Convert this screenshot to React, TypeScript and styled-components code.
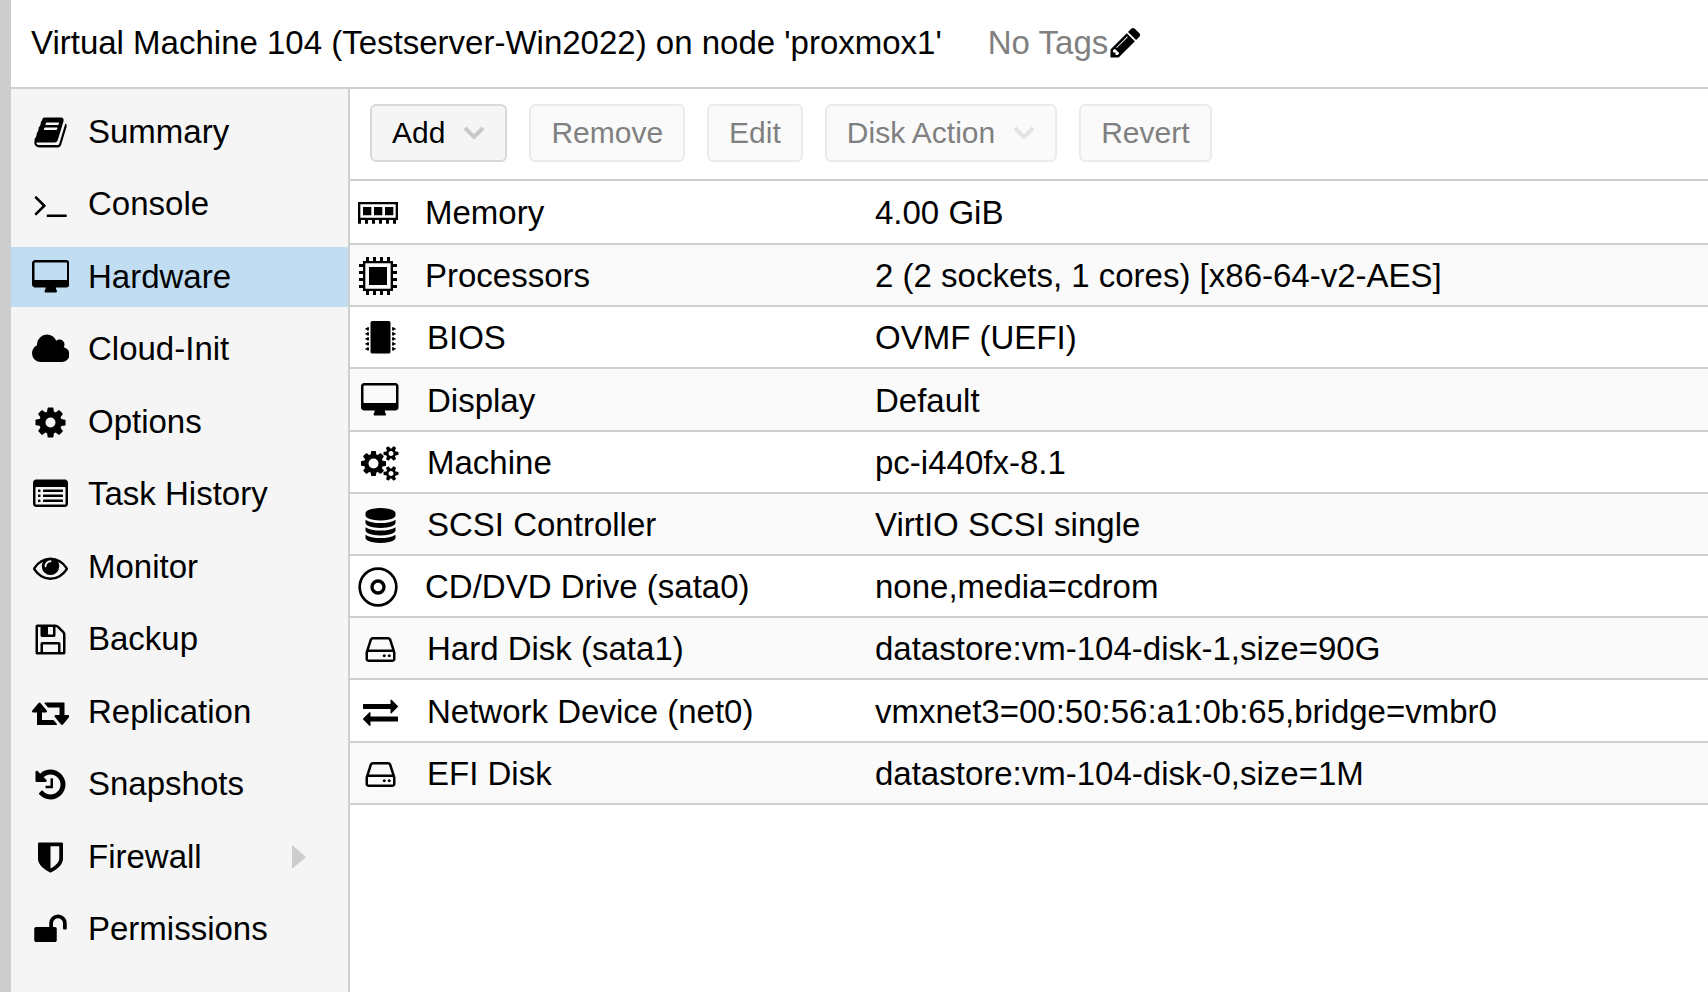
import React from "react";
import styled, { createGlobalStyle, css } from "styled-components";

const GlobalStyle = createGlobalStyle`
  *, *::before, *::after { box-sizing: border-box; }
  body {
    margin: 0;
    background: #fff;
    color: #000;
    font-family: "Liberation Sans", Arial, Helvetica, sans-serif;
    font-size: 33px;
    line-height: 40px;
  }
`;

const LINE = "#cfcfcf";

/* ---------- icons ---------- */

const Glyph = styled.svg`
  display: block;
  height: 35px;
  fill: currentColor;
`;

const DetailGlyph = styled.svg`
  display: block;
  width: 40px;
  height: 40px;
  fill: currentColor;
`;

type IconDef = { w: number; d: string };

const gearArm = (y: string) =>
  `M1920 ${y}v140q0 16-149 31-12 27-30 52 51 113 51 138 0 4-4 7-122 71-124 71-8 0-46-47t-52-68q-20 2-30 2t-30-2q-14 21-52 68t-46 47q-2 0-124-71-4-3-4-7 0-25 51-138-18-25-30-52-149-15-149-31v-140q0-16 149-31 13-29 30-52-51-113-51-138 0-4 4-7 4-2 35-20t59-34 30-16q8 0 46 46.5t52 67.5q20-2 30-2t30 2q51-71 92-112l6-2q4 0 124 70 4 3 4 7 0 25-51 138 17 23 30 52 149 15 149 31z`;

const listDot = (y: number) =>
  `M384 ${y}v64q0 13-9.5 22.5t-22.5 9.5h-64q-13 0-22.5-9.5t-9.5-22.5v-64q0-13 9.5-22.5t22.5-9.5h64q13 0 22.5 9.5t9.5 22.5z`;
const listBar = (y: number) =>
  `M1536 ${y}v64q0 13-9.5 22.5t-22.5 9.5h-960q-13 0-22.5-9.5t-9.5-22.5v-64q0-13 9.5-22.5t22.5-9.5h960q13 0 22.5 9.5t9.5 22.5z`;
const disc = (y: number) =>
  `M896 ${y}q237 0 443-43t325-127v170q0 69-103 128t-280 93.5-385 34.5-385-34.5-280-93.5-103-128v-170q119 84 325 127t443 43z`;
const chipPin = (y: number) =>
  `M304 ${y}h-96v-32h-64q-16 0-16-16v-64q0-16 16-16h64v-32h96zM1488 ${y}h96v-32h64q16 0 16-16v-64q0-16-16-16h-64v-32h-96z`;

const icons: Record<string, IconDef> = {
  book: {
    w: 1792,
    d: "M1703 478q40 57 18 129l-275 906q-19 64-76.5 107.5t-122.5 43.5h-923q-77 0-148.5-53.5t-99.5-131.5q-24-67-2-127 0-4 3-27t4-37q1-8-3-21.5t-3-19.5q2-11 8-21t16.5-23.5 16.5-23.5q23-38 45-91.5t30-91.5q3-10 .5-30t-.5-28q3-11 17-28t17-23q21-36 42-92t25-90q1-9-2.5-32t.5-28q4-13 22-30.5t22-22.5q19-26 42.5-84.5t27.5-96.5q1-8-3-25.5t-2-26.5q2-8 9-18t18-23 17-21q8-12 16.5-30.5t15-35 16-36 19.5-32 26.5-23.5 36-11.5 47.5 5.5l-1 3q38-9 51-9h761q74 0 114 56t18 130l-274 906q-36 119-71.5 153.5t-128.5 34.5h-869q-27 0-38 15-11 16-1 43 24 70 144 70h923q29 0 56-15.5t35-41.5l300-987q7-22 5-57 38 15 59 43zm-1064 2q-4 13 2 22.5t20 9.5h608q13 0 25.5-9.5t16.5-22.5l21-64q4-13-2-22.5t-20-9.5h-608q-13 0-25.5 9.5t-16.5 22.5zm-83 256q-4 13 2 22.5t20 9.5h608q13 0 25.5-9.5t16.5-22.5l21-64q4-13-2-22.5t-20-9.5h-608q-13 0-25.5 9.5t-16.5 22.5z",
  },
  terminal: {
    w: 1792,
    d: "M649 983l-466 466q-10 10-23 10t-23-10l-50-50q-10-10-10-23t10-23l393-393-393-393q-10-10-10-23t10-23l50-50q10-10 23-10t23 10l466 466q10 10 10 23t-10 23zm1079 457v64q0 14-9 23t-23 9h-960q-14 0-23-9t-9-23v-64q0-14 9-23t23-9h960q14 0 23 9t9 23z",
  },
  desktop: {
    w: 1920,
    d: "M1792 992v-832q0-13-9.5-22.5t-22.5-9.5h-1600q-13 0-22.5 9.5t-9.5 22.5v832q0 13 9.5 22.5t22.5 9.5h1600q13 0 22.5-9.5t9.5-22.5zm128-832v1088q0 66-47 113t-113 47h-544q0 37 16 77.5t32 71 16 43.5q0 26-19 45t-45 19h-512q-26 0-45-19t-19-45q0-14 16-44t32-70 16-78h-544q-66 0-113-47t-47-113v-1088q0-66 47-113t113-47h1600q66 0 113 47t47 113z",
  },
  cloud: {
    w: 1920,
    d: "M1920 1152q0 159-112.5 271.5t-271.5 112.5h-1088q-185 0-316.5-131.5t-131.5-316.5q0-132 71-241.5t187-163.5q-2-28-2-43 0-212 150-362t362-150q158 0 286.5 88t187.5 230q70-62 166-62 106 0 181 75t75 181q0 75-41 138 129 30 213 134.5t84 239.5z",
  },
  cog: {
    w: 1792,
    d: "M1152 896q0-106-75-181t-181-75-181 75-75 181 75 181 181 75 181-75 75-181zm512-109v222q0 12-8 23t-20 13l-185 28q-19 54-39 91 35 50 107 138 10 12 10 25t-9 23q-27 37-99 108t-94 71q-12 0-26-9l-138-108q-44 23-91 38-16 136-29 186-7 28-36 28h-222q-14 0-24.5-8.5t-11.5-21.5l-28-184q-49-16-90-37l-141 107q-10 9-25 9-14 0-25-11-126-114-165-168-7-10-7-23 0-12 8-23 15-21 51-66.5t54-70.5q-27-50-41-99l-183-27q-13-2-21-12.5t-8-23.5v-222q0-12 8-23t19-13l186-28q14-46 39-92-40-57-107-138-10-12-10-24 0-10 9-23 26-36 98.5-107.5t94.5-71.5q13 0 26 10l138 107q44-23 91-38 16-136 29-186 7-28 36-28h222q14 0 24.5 8.5t11.5 21.5l28 184q49 16 90 37l142-107q9-9 24-9 13 0 25 10 129 119 165 170 7 8 7 22 0 12-8 23-15 21-51 66.5t-54 70.5q26 50 41 98l183 28q13 2 21 12.5t8 23.5z",
  },
  list: {
    w: 1792,
    d:
      [1184, 928, 672].map((y) => listDot(y) + listBar(y)).join("") +
      "M1664 1376v-832q0-13-9.5-22.5t-22.5-9.5h-1472q-13 0-22.5 9.5t-9.5 22.5v832q0 13 9.5 22.5t22.5 9.5h1472q13 0 22.5-9.5t9.5-22.5zm128-1088v1088q0 66-47 113t-113 47h-1472q-66 0-113-47t-47-113v-1088q0-66 47-113t113-47h1472q66 0 113 47t47 113z",
  },
  eye: {
    w: 1792,
    d: "M1664 960q-152-236-381-353 61 104 61 225 0 185-131.5 316.5t-316.5 131.5-316.5-131.5-131.5-316.5q0-121 61-225-229 117-381 353 133 205 333.5 326.5t434.5 121.5 434.5-121.5 333.5-326.5zm-720-384q0-20-14-34t-34-14q-125 0-214.5 89.5t-89.5 214.5q0 20 14 34t34 14 34-14 14-34q0-86 61-147t147-61q20 0 34-14t14-34zm848 384q0 34-20 69-140 230-376.5 368.5t-499.5 138.5-499.5-139-376.5-368q-20-35-20-69t20-69q140-229 376.5-368t499.5-139 499.5 139 376.5 368q20 35 20 69z",
  },
  floppy: {
    w: 1792,
    d: "M512 1536h768v-384h-768v384zm896 0h128v-896q0-14-10-38.5t-20-34.5l-281-281q-10-10-34-20t-39-10v416q0 40-28 68t-68 28h-576q-40 0-68-28t-28-68v-416h-128v1280h128v-416q0-40 28-68t68-28h832q40 0 68 28t28 68v416zm-384-928v-320q0-13-9.5-22.5t-22.5-9.5h-192q-13 0-22.5 9.5t-9.5 22.5v320q0 13 9.5 22.5t22.5 9.5h192q13 0 22.5-9.5t9.5-22.5zm640 32v928q0 40-28 68t-68 28h-1344q-40 0-68-28t-28-68v-1344q0-40 28-68t68-28h928q40 0 88 20t76 48l280 280q28 28 48 76t20 88z",
  },
  retweet: {
    w: 1920,
    d: "M1280 1504q0 13-9.5 22.5t-22.5 9.5h-960q-8 0-13.5-2t-9-7-5.5-8-3-11.5-1-11.5v-600h-192q-26 0-45-19t-19-45q0-24 15-41l320-384q19-22 49-22t49 22l320 384q15 17 15 41 0 26-19 45t-45 19h-192v384h576q16 0 25 11l160 192q7 10 7 21zm640-416q0 24-15 41l-320 384q-20 23-49 23t-49-23l-320-384q-15-17-15-41 0-26 19-45t45-19h192v-384h-576q-16 0-25-12l-160-192q-7-9-7-20 0-13 9.5-22.5t22.5-9.5h960q8 0 13.5 2t9 7 5.5 8 3 11.5 1 11.5v600h192q26 0 45 19t19 45z",
  },
  history: {
    w: 1792,
    d: "M1664 896q0 156-61 298t-164 245-245 164-298 61q-172 0-327-72.5t-264-204.5q-7-10-6.5-22.5t8.5-20.5l137-138q10-9 25-9 16 2 23 12 73 95 179 147t225 52q104 0 198.5-40.5t163.5-109.5 109.5-163.5 40.5-198.5-40.5-198.5-109.5-163.5-163.5-109.5-198.5-40.5q-98 0-188 35.5t-160 101.5l137 138q31 30 14 69-17 40-59 40h-448q-26 0-45-19t-19-45v-448q0-42 40-59 39-17 69 14l130 129q107-101 244.5-156.5t284.5-55.5q156 0 298 61t245 164 164 245 61 298zm-640-288v448q0 14-9 23t-23 9h-320q-14 0-23-9t-9-23v-64q0-14 9-23t23-9h224v-352q0-14 9-23t23-9h64q14 0 23 9t9 23z",
  },
  shield: {
    w: 1792,
    d: "M1344 960v-640h-448v1137q119-63 213-137 235-184 235-360zm192-768v768q0 86-33.5 170.5t-83 150-118 127.5-126.5 103-121 77.5-89.5 49.5-42.5 20q-12 6-26 6t-26-6q-16-7-42.5-20t-89.5-49.5-121-77.5-126.5-103-118-127.5-83-150-33.5-170.5v-768q0-26 19-45t45-19h1152q26 0 45 19t19 45z",
  },
  unlock: {
    w: 1792,
    d: "M1728 576v256q0 26-19 45t-45 19h-64q-26 0-45-19t-19-45v-256q0-106-75-181t-181-75-181 75-75 181v192h96q40 0 68 28t28 68v576q0 40-28 68t-68 28h-960q-40 0-68-28t-28-68v-576q0-40 28-68t68-28h672v-192q0-185 131.5-316.5t316.5-131.5 316.5 131.5 131.5 316.5z",
  },
  pencil: {
    w: 1792,
    d: "M491 1536l91-91-235-235-91 91v107h128v128h107zm523-928q0-22-22-22-10 0-17 7l-542 542q-7 7-7 17 0 22 22 22 10 0 17-7l542-542q7-7 7-17zm-54-192l416 416-832 832h-416v-416zm683 96q0 53-37 90l-166 166-416-416 166-165q36-38 90-38 53 0 91 38l235 234q37 39 37 91z",
  },
  chip: {
    w: 1792,
    d:
      [480, 736, 992, 1248, 1504].map(chipPin).join("") +
      "M1408 96v1472q0 40-28 68t-68 28h-832q-40 0-68-28t-28-68v-1472q0-40 28-68t68-28h832q40 0 68 28t28 68z",
  },
  cogs: {
    w: 1920,
    d:
      "M896 896q0-106-75-181t-181-75-181 75-75 181 75 181 181 75 181-75 75-181zm768 512q0-52-38-90t-90-38-90 38-38 90q0 53 37.5 90.5t90.5 37.5 90.5-37.5 37.5-90.5zm0-1024q0-52-38-90t-90-38-90 38-38 90q0 53 37.5 90.5t90.5 37.5 90.5-37.5 37.5-90.5zm-384 421v185q0 10-7 19.5t-16 10.5l-155 24q-11 35-32 76 34 48 90 115 7 11 7 20 0 12-7 19-23 30-82.5 89.5t-78.5 59.5q-11 0-21-7l-115-90q-37 19-77 31-11 108-23 155-7 24-30 24h-186q-11 0-20-7.5t-10-17.5l-23-153q-34-10-75-31l-118 89q-7 7-20 7-11 0-21-8-144-133-144-160 0-9 7-19 10-14 41-53t47-61q-23-44-35-82l-152-24q-10-1-17-9.5t-7-19.5v-185q0-10 7-19.5t16-10.5l155-24q11-35 32-76-34-48-90-115-7-11-7-20 0-12 7-20 22-30 82-89t79-59q11 0 21 7l115 90q34-18 77-32 11-108 23-154 7-24 30-24h186q11 0 20 7.5t10 17.5l23 153q34 10 75 31l118-89q8-7 20-7 11 0 21 8 144 133 144 160 0 8-7 19-12 16-42 54t-45 60q23 48 34 82l152 23q10 2 17 10.5t7 19.5z" +
      gearArm("1338") +
      gearArm("314"),
  },
  database: {
    w: 1792,
    d:
      [768, 1152, 1536].map(disc).join("") +
      "M896 0q208 0 385 34.5t280 93.5 103 128v128q0 69-103 128t-280 93.5-385 34.5-385-34.5-280-93.5-103-128v-128q0-69 103-128t280-93.5 385-34.5z",
  },
  hdd: {
    w: 1792,
    d: "M1168 1216q0 33-23.5 56.5t-56.5 23.5-56.5-23.5-23.5-56.5 23.5-56.5 56.5-23.5 56.5 23.5 23.5 56.5zm256 0q0 33-23.5 56.5t-56.5 23.5-56.5-23.5-23.5-56.5 23.5-56.5 56.5-23.5 56.5 23.5 23.5 56.5zm112 160v-320q0-13-9.5-22.5t-22.5-9.5h-1216q-13 0-22.5 9.5t-9.5 22.5v320q0 13 9.5 22.5t22.5 9.5h1216q13 0 22.5-9.5t9.5-22.5zm-1230-480h1180l-157-482q-4-13-16-21.5t-26-8.5h-782q-14 0-26 8.5t-16 21.5zm1358 160v320q0 66-47 113t-113 47h-1216q-66 0-113-47t-47-113v-320q0-25 16-75l197-606q17-53 63-86t101-33h782q55 0 101 33t63 86l197 606q16 50 16 75z",
  },
  exchange: {
    w: 1792,
    d: "M1792 1184v192q0 13-9.5 22.5t-22.5 9.5h-1376v192q0 13-9.5 22.5t-22.5 9.5q-12 0-24-10l-319-320q-9-9-9-22 0-14 9-23l320-320q9-9 23-9 13 0 22.5 9.5t9.5 22.5v192h1376q13 0 22.5 9.5t9.5 22.5zm0-544q0 14-9 23l-320 320q-9 9-23 9-13 0-22.5-9.5t-9.5-22.5v-192h-1376q-13 0-22.5-9.5t-9.5-22.5v-192q0-13 9.5-22.5t22.5-9.5h1376v-192q0-14 9-23t23-9q12 0 24 10l319 319q9 9 9 23z",
  },
};

const Icon = ({ name }: { name: string }) => (
  <Glyph viewBox={`0 0 ${icons[name].w} 1792`} fillRule="nonzero" aria-hidden="true">
    <path d={icons[name].d} />
  </Glyph>
);

const MemoryIcon = () => (
  <DetailGlyph viewBox="0 0 120 120" aria-hidden="true">
    <path
      fillRule="evenodd"
      d="M0 27h120v54h-6v11h-9v-11h-12v11h-9v-11h-12v11h-9v-11h-12v11h-9v-11h-12v11h-9v-11h-12v11h-12v-11h-6zM7 34v40h106v-40z"
    />
    <path d="M15 42h25v25h-25zM48 42h25v25h-25zM81 42h25v25h-25z" />
  </DetailGlyph>
);

const ProcessorIcon = () => (
  <DetailGlyph viewBox="0 0 120 120" aria-hidden="true">
    <path fillRule="evenodd" d="M15 15h90v90h-90zM22 22v76h76v-76z" />
    <path d="M33 33h54v54h-54z" />
    {[24, 45, 66, 87].map((p) => (
      <path
        key={p}
        d={`M${p} 3h9v13h-9zM${p} 104h9v13h-9zM3 ${p}h13v9h-13zM104 ${p}h13v9h-13z`}
      />
    ))}
  </DetailGlyph>
);

const DiscIcon = () => (
  <DetailGlyph viewBox="0 0 120 120" aria-hidden="true">
    <circle cx="60" cy="60" r="55" fill="none" stroke="currentColor" strokeWidth="8" />
    <circle cx="60" cy="60" r="18" fill="none" stroke="currentColor" strokeWidth="10" />
  </DetailGlyph>
);

/* ---------- layout ---------- */

const Page = styled.div`
  display: flex;
  flex-direction: column;
  min-height: 100vh;
  border-left: 11px solid #cdcdce;
`;

const Header = styled.header`
  display: flex;
  align-items: center;
  height: 89px;
  padding: 0 20px 2px;
  border-bottom: 2px solid ${LINE};
`;

const Title = styled.h1`
  margin: 0;
  font-size: 33px;
  font-weight: 400;
  white-space: nowrap;
`;

const Tags = styled.div`
  display: flex;
  align-items: center;
  margin-left: 46px;
  color: #808080;
  white-space: nowrap;
`;

const TagEdit = styled.button`
  padding: 0;
  border: 0;
  background: none;
  color: #000;
`;

const Body = styled.div`
  display: flex;
  flex: 1;
`;

const Sidebar = styled.nav`
  flex: none;
  width: 339px;
  border-right: 2px solid ${LINE};
  background: #f5f5f5;
`;

const Menu = styled.ul`
  margin: 0;
  padding: 13px 0;
  list-style: none;
`;

const MenuItem = styled.li`
  margin-bottom: 12px;
  &:nth-child(even) {
    margin-bottom: 13px;
  }
`;

const MenuLink = styled.a<{ $active?: boolean }>`
  display: flex;
  align-items: center;
  height: 60px;
  padding: 0 42px 0 17px;
  color: #000;
  text-decoration: none;
  ${(p) =>
    p.$active &&
    css`
      background: #c1ddf1;
    `}
`;

const IconSlot = styled.span<{ $width: number; $gap: number }>`
  display: flex;
  flex: none;
  justify-content: center;
  width: ${(p) => p.$width}px;
  margin-right: ${(p) => p.$gap}px;
`;

const Expander = styled.svg`
  width: 14px;
  height: 24px;
  margin-left: auto;
  fill: #cdcdcd;
`;

const Main = styled.main`
  flex: 1;
  min-width: 0;
`;

const Toolbar = styled.div`
  display: flex;
  align-items: center;
  gap: 22px;
  height: 92px;
  padding: 0 20px 2px;
  border-bottom: 2px solid ${LINE};
`;

const ToolButton = styled.button`
  display: flex;
  align-items: center;
  gap: 18px;
  height: 58px;
  padding: 0 20px;
  border: 2px solid #d8d8d8;
  border-radius: 6px;
  background: #f5f5f5;
  color: #000;
  font: inherit;
  font-size: 30px;
  white-space: nowrap;
  &:disabled {
    border-color: #ebebeb;
    background: #fafafa;
    color: #808080;
  }
`;

const Chevron = styled.svg`
  width: 22px;
  height: 16px;
  fill: none;
  stroke: #c8c8c8;
  stroke-width: 4;
  ${ToolButton}:disabled & {
    stroke: #e3e3e3;
  }
`;

const Grid = styled.table`
  width: 100%;
  border-collapse: separate;
  border-spacing: 0;
  table-layout: fixed;
`;

const Row = styled.tr`
  height: 62px;
  &:first-child {
    height: 64px;
  }
  &:nth-child(5n + 4) {
    height: 63px;
  }
  &:nth-child(even) {
    background: #fafafa;
  }
`;

const NameCell = styled.th`
  width: 523px;
  padding: 2px 0 0 8px;
  border-bottom: 2px solid ${LINE};
  font-weight: 400;
  text-align: left;
`;

const ValueCell = styled.td`
  padding: 2px 2px 0;
  border-bottom: 2px solid ${LINE};
  white-space: nowrap;
`;

const NameLine = styled.div`
  display: flex;
  align-items: center;
  white-space: nowrap;
`;

/* ---------- data ---------- */

const menu = [
  { icon: "book", label: "Summary" },
  { icon: "terminal", label: "Console" },
  { icon: "desktop", label: "Hardware", active: true },
  { icon: "cloud", label: "Cloud-Init" },
  { icon: "cog", label: "Options" },
  { icon: "list", label: "Task History" },
  { icon: "eye", label: "Monitor" },
  { icon: "floppy", label: "Backup" },
  { icon: "retweet", label: "Replication" },
  { icon: "history", label: "Snapshots" },
  { icon: "shield", label: "Firewall", expandable: true },
  { icon: "unlock", label: "Permissions" },
];

const hardware: { icon: string | React.ReactElement; name: string; value: string }[] = [
  { icon: <MemoryIcon />, name: "Memory", value: "4.00 GiB" },
  { icon: <ProcessorIcon />, name: "Processors", value: "2 (2 sockets, 1 cores) [x86-64-v2-AES]" },
  { icon: "chip", name: "BIOS", value: "OVMF (UEFI)" },
  { icon: "desktop", name: "Display", value: "Default" },
  { icon: "cogs", name: "Machine", value: "pc-i440fx-8.1" },
  { icon: "database", name: "SCSI Controller", value: "VirtIO SCSI single" },
  { icon: <DiscIcon />, name: "CD/DVD Drive (sata0)", value: "none,media=cdrom" },
  { icon: "hdd", name: "Hard Disk (sata1)", value: "datastore:vm-104-disk-1,size=90G" },
  { icon: "exchange", name: "Network Device (net0)", value: "vmxnet3=00:50:56:a1:0b:65,bridge=vmbr0" },
  { icon: "hdd", name: "EFI Disk", value: "datastore:vm-104-disk-0,size=1M" },
];

const actions = [
  { label: "Add", menu: true, enabled: true },
  { label: "Remove" },
  { label: "Edit" },
  { label: "Disk Action", menu: true },
  { label: "Revert" },
];

export default function App() {
  return (
    <>
      <GlobalStyle />
      <Page>
        <Header>
          <Title>Virtual Machine 104 (Testserver-Win2022) on node 'proxmox1'</Title>
          <Tags>
            No Tags
            <TagEdit type="button" aria-label="Edit tags">
              <Icon name="pencil" />
            </TagEdit>
          </Tags>
        </Header>
        <Body>
          <Sidebar aria-label="Virtual machine">
            <Menu>
              {menu.map((m) => (
                <MenuItem key={m.label}>
                  <MenuLink
                    href={`#${m.label.toLowerCase().replace(" ", "-")}`}
                    $active={m.active}
                    aria-current={m.active ? "page" : undefined}
                  >
                    <IconSlot $width={45} $gap={15}>
                      <Icon name={m.icon} />
                    </IconSlot>
                    {m.label}
                    {m.expandable && (
                      <Expander viewBox="0 0 14 24" aria-hidden="true">
                        <path d="M0 0L14 12L0 24z" />
                      </Expander>
                    )}
                  </MenuLink>
                </MenuItem>
              ))}
            </Menu>
          </Sidebar>
          <Main>
            <Toolbar role="toolbar" aria-label="Hardware actions">
              {actions.map((a) => (
                <ToolButton key={a.label} type="button" disabled={!a.enabled}>
                  {a.label}
                  {a.menu && (
                    <Chevron viewBox="0 0 22 16" aria-hidden="true">
                      <path d="M2 3L11 12L20 3" />
                    </Chevron>
                  )}
                </ToolButton>
              ))}
            </Toolbar>
            <Grid aria-label="Hardware">
              <tbody>
                {hardware.map((h) => {
                  const plain = typeof h.icon === "string";
                  return (
                    <Row key={h.name}>
                      <NameCell scope="row">
                        <NameLine>
                          <IconSlot $width={plain ? 44 : 40} $gap={plain ? 25 : 27}>
                            {typeof h.icon === "string" ? <Icon name={h.icon} /> : h.icon}
                          </IconSlot>
                          {h.name}
                        </NameLine>
                      </NameCell>
                      <ValueCell>{h.value}</ValueCell>
                    </Row>
                  );
                })}
              </tbody>
            </Grid>
          </Main>
        </Body>
      </Page>
    </>
  );
}
